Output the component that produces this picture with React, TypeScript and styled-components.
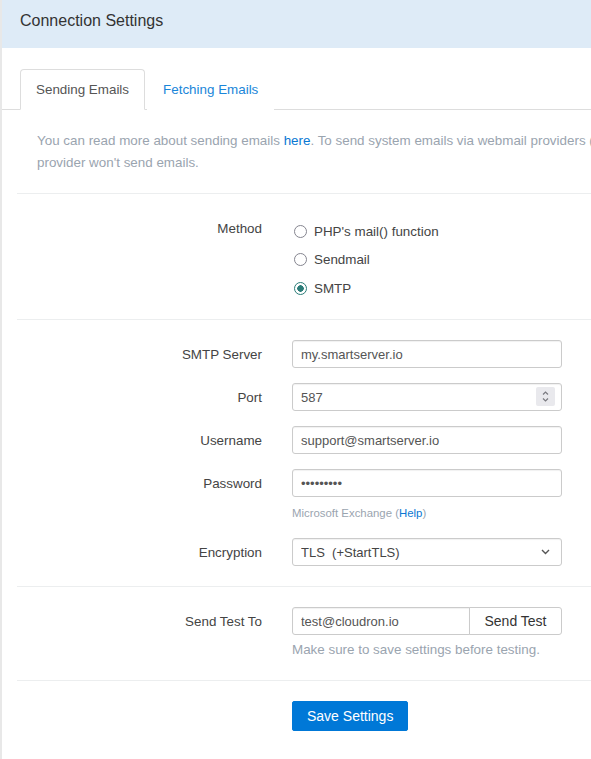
import React from "react";
import styled, { createGlobalStyle } from "styled-components";

const Global = createGlobalStyle`
  html, body { margin: 0; padding: 0; overflow: hidden; }
  body {
    background: #e8e8e8;
    font-family: "Liberation Sans", Arial, sans-serif;
    color: #333;
  }
  * { box-sizing: border-box; }
`;

const Page = styled.div`
  padding-left: 2px;
  width: 960px;
`;

const Panel = styled.div`
  background: #fff;
  min-height: 780px;
`;

const PanelHeader = styled.div`
  background: #deebf7;
  height: 48px;
  padding: 11px 18px 0;
`;

const Title = styled.h3`
  margin: 0;
  font-size: 16px;
  line-height: 20px;
  font-weight: normal;
  color: #333;
`;

const Tabs = styled.ul`
  list-style: none;
  margin: 21px 0 0;
  padding: 0 0 0 18px;
  display: flex;
  border-bottom: 1px solid #ddd;
`;

const Tab = styled.li<{ $active?: boolean }>`
  margin: 0 2px -1px 0;
  padding: 10px 15px 9px;
  font-size: 13.4px;
  line-height: 20px;
  border: 1px solid ${(p) => (p.$active ? "#ddd" : "transparent")};
  border-bottom-color: ${(p) => (p.$active ? "#fff" : "transparent")};
  border-radius: 4px 4px 0 0;
  background: #fff;
  color: ${(p) => (p.$active ? "#555" : "#1a86d9")};
`;

const Body = styled.div`
  padding: 0 15px;
`;

const Intro = styled.p`
  margin: 0;
  padding: 20px 20px 19px;
  font-size: 13.4px;
  line-height: 22px;
  color: #9aa4af;
  white-space: nowrap;
`;

const Link = styled.a`
  color: #0b78d3;
  text-decoration: none;
`;

const Divider = styled.hr`
  margin: 0;
  border: 0;
  border-top: 1px solid #eceeef;
`;

const Section = styled.div<{ $pt?: number; $pb?: number }>`
  padding: ${(p) => p.$pt ?? 20}px 0 ${(p) => p.$pb ?? 20}px;
  display: flex;
  flex-direction: column;
  gap: 15px;
`;

const Row = styled.div`
  display: grid;
  grid-template-columns: 245px 270px;
  column-gap: 30px;
  align-items: start;
`;

const Label = styled.label<{ $pt?: number }>`
  text-align: right;
  font-size: 13.4px;
  line-height: 20px;
  padding-top: ${(p) => p.$pt ?? 5}px;
  color: #444;
`;

const Field = styled.div`
  display: flex;
  flex-direction: column;
`;

const RadioGroup = styled.div`
  padding-top: 3px;
  display: flex;
  flex-direction: column;
`;

const RadioRow = styled.label`
  height: 28.5px;
  display: flex;
  align-items: center;
  font-size: 13.4px;
  color: #444;
`;

const Radio = styled.input`
  appearance: none;
  width: 13px;
  height: 13px;
  margin: 0 7px 0 2px;
  border: 1.6px solid #85858f;
  border-radius: 50%;
  background: #fff;
  &:checked {
    border-color: #2b7c78;
    background: radial-gradient(circle, #2b7c78 0 3px, #fff 3.5px);
  }
`;

const Input = styled.input<{ $grouped?: boolean }>`
  width: 100%;
  height: 28px;
  padding: 0 8px;
  border: 1px solid #cbcbcb;
  border-radius: ${(p) => (p.$grouped ? "3px 0 0 3px" : "3px")};
  box-shadow: inset 0 1px 1px rgba(0, 0, 0, 0.06);
  font-family: "Liberation Sans", Arial, sans-serif;
  font-size: 13px;
  color: #555;
  background: #fff;
  outline: none;
  &::-webkit-inner-spin-button,
  &::-webkit-outer-spin-button {
    -webkit-appearance: none;
    margin: 0;
  }
  -moz-appearance: textfield;
`;

const Wrap = styled.div`
  position: relative;
`;

const Spinner = styled.div`
  position: absolute;
  right: 7px;
  top: 4px;
  width: 19px;
  height: 19px;
  background: #e9e9ed;
  border-radius: 2px;
  display: flex;
  align-items: center;
  justify-content: center;
`;

const Select = styled.select`
  width: 100%;
  height: 28px;
  padding: 0 8px;
  appearance: none;
  border: 1px solid #cbcbcb;
  border-radius: 3px;
  box-shadow: inset 0 1px 1px rgba(0, 0, 0, 0.06);
  background: #fff;
  font-family: "Liberation Sans", Arial, sans-serif;
  font-size: 13px;
  color: #444;
`;

const Chevron = styled.svg`
  position: absolute;
  right: 12px;
  top: 11px;
  pointer-events: none;
`;

const Help = styled.span`
  display: block;
  margin: 8px 0 2px;
  font-size: 11.4px;
  line-height: 16px;
  color: #9aa4af;
`;

const HelpLarge = styled.span`
  display: block;
  margin-top: 5px;
  font-size: 13.4px;
  line-height: 20px;
  color: #9aa4af;
`;

const Group = styled.div`
  display: flex;
`;

const GroupButton = styled.button`
  flex: 0 0 93px;
  height: 28px;
  margin-left: -1px;
  border: 1px solid #cbcbcb;
  border-radius: 0 3px 3px 0;
  background: #fff;
  font-family: "Liberation Sans", Arial, sans-serif;
  font-size: 14px;
  color: #333;
  padding: 0;
`;

const PrimaryButton = styled.button`
  justify-self: start;
  height: 30px;
  padding: 0 14px;
  border: 1px solid #0078d7;
  border-radius: 2px;
  background: #0078d7;
  color: #fff;
  font-family: "Liberation Sans", Arial, sans-serif;
  font-size: 14px;
`;

export default function App() {
  return (
    <>
      <Global />
      <Page>
        <Panel>
          <PanelHeader>
            <Title>Connection Settings</Title>
          </PanelHeader>
          <Tabs>
            <Tab $active>Sending Emails</Tab>
            <Tab>Fetching Emails</Tab>
          </Tabs>
          <Body>
            <Intro>
              You can read more about sending emails <Link href="#">here</Link>. To send system emails via webmail
              providers (like Gmail), configure an SMTP relay. Without it, your email
              <br />
              provider won't send emails.
            </Intro>
            <Divider />
            <Section $pt={20} $pb={16.5}>
              <Row>
                <Label $pt={5}>Method</Label>
                <RadioGroup>
                  <RadioRow>
                    <Radio type="radio" name="method" />
                    PHP's mail() function
                  </RadioRow>
                  <RadioRow>
                    <Radio type="radio" name="method" />
                    Sendmail
                  </RadioRow>
                  <RadioRow>
                    <Radio type="radio" name="method" defaultChecked />
                    SMTP
                  </RadioRow>
                </RadioGroup>
              </Row>
            </Section>
            <Divider />
            <Section>
              <Row>
                <Label>SMTP Server</Label>
                <Input type="text" readOnly defaultValue="my.smartserver.io" />
              </Row>
              <Row>
                <Label>Port</Label>
                <Wrap>
                  <Input type="number" readOnly defaultValue={587} />
                  <Spinner>
                    <svg width="9" height="13" viewBox="0 0 9 13" fill="none" stroke="#7a7a80" strokeWidth="1.2">
                      <path d="M2 4.5 L4.5 2 L7 4.5" />
                      <path d="M2 8.5 L4.5 11 L7 8.5" />
                    </svg>
                  </Spinner>
                </Wrap>
              </Row>
              <Row>
                <Label>Username</Label>
                <Input type="text" readOnly defaultValue="support@smartserver.io" />
              </Row>
              <Row>
                <Label>Password</Label>
                <Field>
                  <Input type="password" readOnly defaultValue="123456789" />
                  <Help>
                    Microsoft Exchange (<Link href="#">Help</Link>)
                  </Help>
                </Field>
              </Row>
              <Row>
                <Label>Encryption</Label>
                <Wrap>
                  <Select defaultValue="tls">
                    <option value="tls">{"TLS\u00a0 (+StartTLS)"}</option>
                  </Select>
                  <Chevron width="9" height="6" viewBox="0 0 9 6" fill="none" stroke="#555" strokeWidth="1.4">
                    <path d="M1 1 L4.5 4.5 L8 1" />
                  </Chevron>
                </Wrap>
              </Row>
            </Section>
            <Divider />
            <Section>
              <Row>
                <Label>Send Test To</Label>
                <Field>
                  <Group>
                    <Input $grouped type="text" readOnly defaultValue="test@cloudron.io" />
                    <GroupButton>Send Test</GroupButton>
                  </Group>
                  <HelpLarge>Make sure to save settings before testing.</HelpLarge>
                </Field>
              </Row>
            </Section>
            <Divider />
            <Section>
              <Row>
                <span />
                <PrimaryButton>Save Settings</PrimaryButton>
              </Row>
            </Section>
          </Body>
        </Panel>
      </Page>
    </>
  );
}
